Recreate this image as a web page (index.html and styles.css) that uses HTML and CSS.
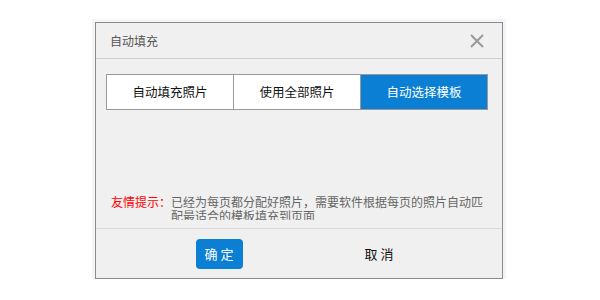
FILE: index.html
```html
<!DOCTYPE html>
<html lang="zh-CN">
  <head>
    <meta charset="utf-8" />
    <title>自动填充</title>
    <link rel="stylesheet" href="styles.css">
  </head>
  <body>
    <div class="dialog">
      <div class="dialog-head">
        <span class="dialog-title">自动填充</span>
        <svg class="dialog-close" width="14" height="14" viewBox="0 0 14 14">
          <path d="M1 1L13 13M13 1L1 13" stroke="#9a9a9a" stroke-width="2" fill="none" />
        </svg>
      </div>
      <div class="dialog-body">
        <div class="tabs">
          <div class="tab">自动填充照片</div>
          <div class="tab">使用全部照片</div>
          <div class="tab active">自动选择模板</div>
        </div>
        <div class="tip">
          <span class="tip-label">友情提示：</span>
          <span class="tip-text">已经为每页都分配好照片，需要软件根据每页的照片自动匹配最适合的模板填充到页面</span>
        </div>
      </div>
      <div class="dialog-foot">
        <div class="btn btn-ok">确 定</div>
        <div class="btn btn-cancel">取 消</div>
      </div>
    </div>
  </body>
</html>
```

FILE: styles.css
```css
body {
  margin: 0;
  background: #fff;
  font-family: "Noto Sans CJK SC", "Noto Sans", sans-serif;
  font-size: 12px;
}
.dialog {
  width: 406px;
  height: 255px;
  margin: 22px 0 0 95px;
  border: 1px solid #8a8a8a;
  background: #f0f0f0;
  box-shadow: 0 0 0 3px #f3f5f8;
  display: flex;
  flex-direction: column;
}
.dialog-head {
  height: 35px;
  border-bottom: 1px solid #cfcfcf;
  display: flex;
  align-items: center;
  justify-content: space-between;
  padding: 0 18px 0 14px;
}
.dialog-title {
  color: #555;
  font-size: 12px;
}
.dialog-body {
  height: 170px;
  padding: 15px 14px 0 10px;
  box-sizing: border-box;
  border-bottom: 1px solid #dcdcdc;
}
.tabs {
  display: flex;
}
.tab {
  width: 126px;
  height: 34px;
  line-height: 34px;
  text-align: center;
  background: #fff;
  color: #111;
  border: 1px solid #999;
  border-right: 0;
  font-size: 12.5px;
}
.tab:last-child {
  border-right: 1px solid #999;
}
.tab.active {
  background: #0a7fd3;
  color: #fff;
}
.tip {
  display: flex;
  margin-top: 85px;
  padding: 0 1px 0 5px;
  height: 25px;
  overflow: hidden;
  line-height: 14px;
}
.tip-label {
  color: #f00;
  white-space: nowrap;
}
.tip-text {
  flex: 1;
  color: #666;
}
.dialog-foot {
  flex: 1;
  display: flex;
  justify-content: center;
  align-items: center;
  gap: 113px;
}
.btn {
  width: 47px;
  height: 30px;
  line-height: 30px;
  text-align: center;
  border-radius: 4px;
  font-size: 13px;
}
.btn-ok {
  background: #0a7fd3;
  color: #fff;
}
.btn-cancel {
  color: #111;
}
```
